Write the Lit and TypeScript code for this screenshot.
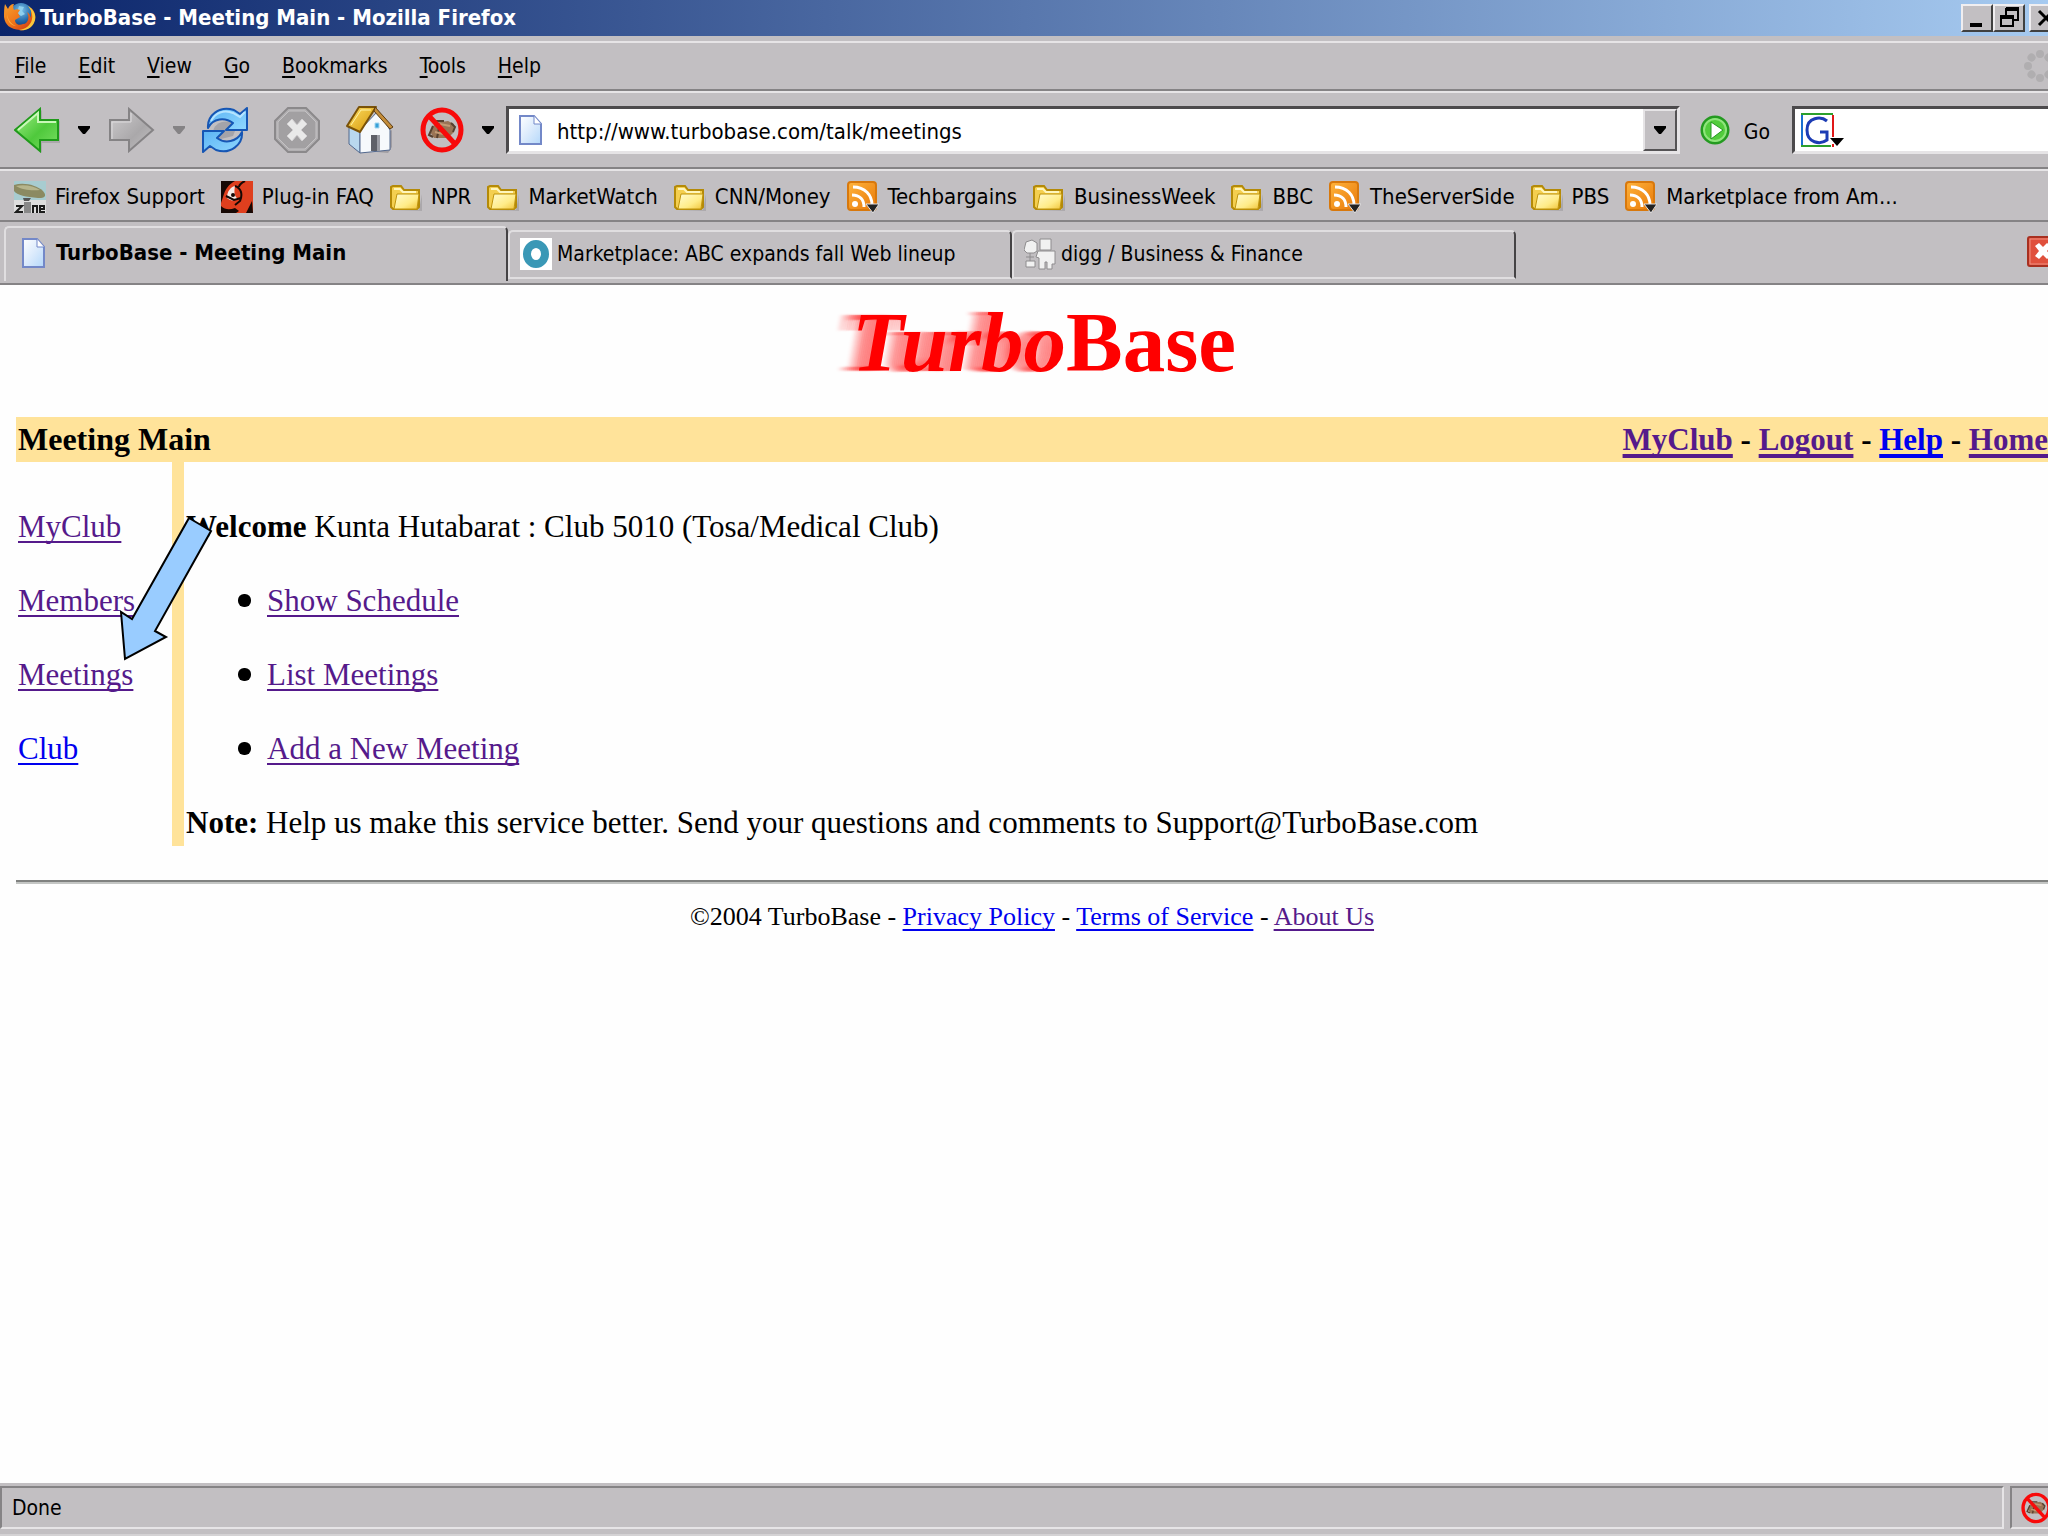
import { LitElement, html, css, svg, nothing } from "lit";
import { customElement } from "lit/decorators.js";
import { classMap } from "lit/directives/class-map.js";

const firefoxIcon = html`<svg class="ic32" viewBox="0 0 32 32" aria-hidden="true">
  <defs>
    <radialGradient id="globe" cx=".5" cy=".3" r=".7"><stop offset="0" stop-color="#7cc4ea"/><stop offset=".6" stop-color="#2a6fae"/><stop offset="1" stop-color="#123a78"/></radialGradient>
    <linearGradient id="fox" x1="0" y1="0" x2="1" y2="1"><stop offset="0" stop-color="#f7a12c"/><stop offset=".5" stop-color="#f0741a"/><stop offset="1" stop-color="#c92a12"/></linearGradient>
  </defs>
  <circle cx="17" cy="13" r="12" fill="url(#globe)"/>
  <path d="M15 4l5 1-2 4 3 3-4 2-4-3z" fill="#8fd0ee"/>
  <path d="M1 2l3 5c1-3 3-5 6-5-1 2-1 4 0 6 2-1 4-1 6 0l-2 3 2 4-5 3c0 4 4 6 8 4 3 0 4-2 5-4 1-3 0-6-1-8 2 1 3 3 4 6V6c5 4 5 10 3 14-3 6-9 9-14 8C6 27 1 23 0 15c0-5 0-9 1-13z" fill="url(#fox)"/>
  <path d="M24 4c7 4 9 11 6 17-3 6-9 8-15 7 7-1 12-5 13-11 1-5-1-9-4-13z" fill="#f9c63a"/>
  <path d="M3 12c1 6 4 10 9 12-5 0-9-5-9-12z" fill="#fbb040"/>
</svg>`;

const backIcon = html`<svg class="ic46" viewBox="0 0 46 46" aria-hidden="true">
  <defs><linearGradient id="gr" x1="0" y1="0" x2="1" y2="1"><stop offset="0" stop-color="#a5f08a"/><stop offset=".55" stop-color="#4fc93c"/><stop offset="1" stop-color="#7be064"/></linearGradient></defs>
  <path d="M3 25L28 3v11h18v22H28v10z" fill="#8a888a" opacity=".4"/>
  <path d="M1 23L26 2v11h18v20H26v11z" fill="url(#gr)" stroke="#1f9a1a" stroke-width="2"/>
  <path d="M4 23L24 6v9h18" fill="none" stroke="#c9f8b8" stroke-width="2"/>
</svg>`;

const forwardIcon = html`<svg class="ic46" viewBox="0 0 46 46" aria-hidden="true">
  <defs><linearGradient id="gy" x1="0" y1="0" x2="1" y2="1"><stop offset="0" stop-color="#cfcdcf"/><stop offset=".6" stop-color="#aaa8aa"/><stop offset="1" stop-color="#c4c2c4"/></linearGradient></defs>
  <path d="M44 23L20 2v11H1v20h19v11z" fill="url(#gy)" stroke="#858385" stroke-width="2"/>
  <path d="M3 32V15h19V6" fill="none" stroke="#dddbdd" stroke-width="1"/>
</svg>`;

const reloadIcon = html`<svg class="ic46" viewBox="0 0 46 46" aria-hidden="true">
  <defs><linearGradient id="bl" x1="0" y1="0" x2="1" y2="1"><stop offset="0" stop-color="#5cb4f4"/><stop offset="1" stop-color="#90d8ff"/></linearGradient></defs>
  <path d="M11 26c0-8 8-13 18-11l6 4-4 10-12 3z" fill="#8f9198" opacity=".6"/>
  <path d="M6 21C5 9 17-2 32 3l6 4 7-6v22H24l7-7c-8-6-20-5-25 5z" fill="url(#bl)" stroke="#1656b4" stroke-width="2" stroke-linejoin="round"/>
  <path d="M40 25c1 12-11 23-26 18l-6-4-7 6V24h21l-7 7c8 6 20 4 25-6z" fill="url(#bl)" stroke="#1656b4" stroke-width="2" stroke-linejoin="round"/>
  <path d="M9 14C13 6 22 2 31 6l7 4 5-5" fill="none" stroke="#b6e4ff" stroke-width="2"/>
</svg>`;

const stopIcon = html`<svg class="ic46" viewBox="0 0 46 46" aria-hidden="true">
  <path d="M14 1h18l13 13v18L32 45H14L1 32V14z" fill="#b2b0b2" stroke="#8b898b" stroke-width="2"/>
  <path d="M15 4h16l11 11v16L31 42H15L4 31V15z" fill="#a2a0a2" stroke="#c4c2c4" stroke-width="1"/>
  <path d="M13 17l5-5 5 6 5-6 5 5-6 6 6 6-5 5-5-6-5 6-5-5 6-6z" fill="#e9e9e9" stroke="#d2d0d2"/>
</svg>`;

const homeIcon = html`<svg class="ic48" viewBox="0 0 48 48" aria-hidden="true">
  <defs><linearGradient id="roof" x1="0" y1="0" x2="1" y2="1"><stop offset="0" stop-color="#ffdf62"/><stop offset="1" stop-color="#d29408"/></linearGradient></defs>
  <path d="M8 44l34 3 4-6V24z" fill="#6e6c72" opacity=".4"/>
  <path d="M3 19l11 5v23L3 38z" fill="#b9d8ee" stroke="#52688e"/>
  <path d="M14 24L32 5l12 19v20l-30 3z" fill="#f6f9fc" stroke="#52688e"/>
  <path d="M25 29h9v16h-9z" fill="#5e6068"/><path d="M31 29h3v16h-3z" fill="#9a9ca4"/>
  <path d="M29 17h4v5h-4z" fill="#37a0d8" stroke="#a4d6f0"/>
  <path d="M1 20L13 1h17L14 26z" fill="url(#roof)" stroke="#7a5208" stroke-width="2" stroke-linejoin="round"/>
  <path d="M29 1l18 20-3 2L28 5z" fill="#c48d3a" stroke="#5c3c10"/>
  <path d="M5 19l10-15h10" fill="none" stroke="#fff4a8"/>
</svg>`;

const blockIcon = (cls: string) => html`<svg class=${cls} viewBox="0 0 44 46" aria-hidden="true">
  <path d="M15 16l13-2 6 3v8l-6 6H14l-4-6z" fill="#9a7456"/>
  <path d="M14 14h10M13 19l-4 9 4 2M19 21l-2 10M31 16l4 4-2 5" stroke="#57402f" stroke-width="2" fill="none"/>
  <path d="M20 17l10 2M15 25l8 2" stroke="#c39a74" stroke-width="2"/>
  <path d="M10 10l25 27" stroke="#f80a0a" stroke-width="5"/>
  <ellipse cx="22" cy="23" rx="19" ry="20" fill="none" stroke="#f80a0a" stroke-width="5"/>
</svg>`;

const pageIcon = html`<svg class="page-icon" viewBox="0 0 24 30" aria-hidden="true">
  <defs><linearGradient id="pg" x1="0" y1="0" x2="1" y2="1"><stop offset="0" stop-color="#fff"/><stop offset=".5" stop-color="#dcebfc"/><stop offset="1" stop-color="#b4d8fa"/></linearGradient></defs>
  <path d="M1 1h14l7 8v20H1z" fill="url(#pg)" stroke="#7388c8" stroke-width="2"/>
  <path d="M15 1v8h7" fill="#fff" stroke="#7388c8" stroke-width="1"/>
</svg>`;

const folderIcon = html`<svg class="ic32" viewBox="0 0 32 32" aria-hidden="true">
  <defs><linearGradient id="fd" x1="0" y1="0" x2="1" y2="1"><stop offset="0" stop-color="#fffbd0"/><stop offset=".6" stop-color="#ffec88"/><stop offset="1" stop-color="#f0c43a"/></linearGradient></defs>
  <path d="M4 29h25l3-16v17z" fill="#8a888a" opacity=".4"/>
  <path d="M1 6l2-1h8l3 4h15v17l-2 2H3l-2-2z" fill="#f4cf50" stroke="#b48a08" stroke-width="2"/>
  <path d="M4 8h6l3 3h13" stroke="#fff6bc" stroke-width="2" fill="none"/>
  <path d="M7 13h22l-2 15H4z" fill="url(#fd)" stroke="#c0940c" stroke-width="1"/>
</svg>`;

const feedIcon = html`<svg class="ic32" viewBox="0 0 32 32" aria-hidden="true">
  <defs><linearGradient id="rss" x1="0" y1="0" x2="1" y2="1"><stop offset="0" stop-color="#ffb43c"/><stop offset="1" stop-color="#e87808"/></linearGradient></defs>
  <rect x="1" y="1" width="28" height="28" rx="3" fill="url(#rss)" stroke="#d8780c" stroke-width="2"/>
  <circle cx="8" cy="23" r="3" fill="#fff"/>
  <path d="M5 14c8 0 12 5 12 12M6 6c12 0 19 8 19 18" fill="none" stroke="#fff" stroke-width="3"/>
  <path d="M19 23h13l-6 9z" fill="#222" stroke="#e2e0e2" stroke-width="1"/>
</svg>`;

const zineIcon = html`<svg class="ic32" viewBox="0 0 32 32" aria-hidden="true">
  <rect width="32" height="20" fill="#a8ccd0"/><rect y="19" width="32" height="13" fill="#dedede"/>
  <path d="M0 4c10-3 22 0 29 6 4 5 2 7-5 7C12 16 3 14 0 10z" fill="#8b8a62"/>
  <path d="M2 5c8-2 18 0 24 4-8 1-18 0-24-4z" fill="#b6b58c"/>
  <path d="M9 17h8l-2 3h-5z" fill="#555"/>
  <rect x="10" y="21" width="7" height="11" fill="#888"/>
  <path d="M2 25h6l-6 6h7M19 32v-7h4v7M26 28h4v-3h-4v6h5" fill="none" stroke="#1c1c1c" stroke-width="2"/>
</svg>`;

const mozillaIcon = html`<svg class="ic32" viewBox="0 0 32 32" aria-hidden="true">
  <rect width="32" height="32" fill="#df3f1e"/>
  <path d="M0 0h14C8 3 4 8 2 16L0 22zM0 25c4 4 9 4 14 2l4 3-3 2H0zM32 32h-7l6-12z" fill="#160804"/>
  <path d="M6 17c0-6 3-11 8-12-1 6-1 10 3 13-4 2-8 2-11-1z" fill="#f4ece8"/>
  <path d="M5 15l8 4 7-2M14 5c6 2 8 8 5 15l-5 4M24 0c-4 2-6 4-6 6" fill="none" stroke="#160804" stroke-width="2"/>
  <circle cx="12" cy="14" r="2" fill="#160804"/>
</svg>`;

const ringIcon = html`<svg class="ic32" viewBox="0 0 32 32" aria-hidden="true">
  <rect width="32" height="32" fill="#fff"/><ellipse cx="16" cy="16" rx="9" ry="10" fill="#fff" stroke="#3a98b6" stroke-width="8"/>
</svg>`;

const diggIcon = html`<svg class="ic32" viewBox="0 0 32 32" aria-hidden="true">
  <g fill="#f1f1f1" stroke="#8e8c8e" stroke-width="1">
    <path d="M2 4l6-2 5 3v8l-3 2H3l-3-3z"/><path d="M6 15v8M2 19h8" fill="none"/><path d="M2 23h9v6H2z"/>
    <path d="M16 1h11v11H16z"/><path d="M14 13h17v13h-3v5h-5v-7h-2v7h-6V20l-3-1z"/>
  </g>
</svg>`;

const goIcon = html`<svg class="ic32" viewBox="0 0 32 32" aria-hidden="true">
  <circle cx="16" cy="16" r="13" fill="#52cc3c" stroke="#249a20" stroke-width="3"/>
  <circle cx="16" cy="16" r="11" fill="none" stroke="#8fe47c" stroke-width="2"/>
  <path d="M12 8l12 8-12 9z" fill="#fff" stroke="#249a20"/>
</svg>`;

const searchEngineIcon = html`<svg class="engine" viewBox="0 0 44 34" aria-hidden="true">
  <path d="M1 34V1" stroke="#1a6fd0" stroke-width="2"/><path d="M0 1h32M0 33h30" stroke="#2ca02c" stroke-width="2"/>
  <path d="M32 2v22M32 31v3" stroke="#e01818" stroke-width="2"/>
  <path d="M26 8C20 3 6 4 6 17s13 15 20 10V19h-7" fill="none" stroke="#1c3cb4" stroke-width="3"/>
  <path d="M29 25h14l-7 8z" fill="#000"/>
</svg>`;

const tri = (disabled = false) => html`<svg class="tri" viewBox="0 0 12 8" aria-hidden="true"><path d="M0 0h12v2l-5 6H5L0 2z" fill=${disabled ? "#858385" : "#000"}/></svg>`;

const throbber = html`<svg class="throbber" viewBox="0 0 34 34" aria-hidden="true">
  ${[0, 45, 90, 135, 180, 225, 270, 315].map(a => svg`<circle cx="17" cy="5" r="4" fill="#b0aeb0" transform=${`rotate(${a} 17 17)`}/>`)}
</svg>`;

const closeTabIcon = html`<svg class="ic32" viewBox="0 0 32 32" aria-hidden="true">
  <rect x="1" y="1" width="30" height="29" rx="2" fill="#e0503c" stroke="#a83020" stroke-width="2"/>
  <rect x="3" y="3" width="26" height="25" fill="none" stroke="#f09080"/>
  <path d="M8 10l4-3 4 4 4-4 4 3-4 5 4 5-4 3-4-4-4 4-4-3 4-5z" fill="#fff"/>
</svg>`;

const menus = ["File", "Edit", "View", "Go", "Bookmarks", "Tools", "Help"];

const bookmarks = [
  { icon: zineIcon, label: "Firefox Support" },
  { icon: mozillaIcon, label: "Plug-in FAQ" },
  { icon: folderIcon, label: "NPR" },
  { icon: folderIcon, label: "MarketWatch" },
  { icon: folderIcon, label: "CNN/Money" },
  { icon: feedIcon, label: "Techbargains" },
  { icon: folderIcon, label: "BusinessWeek" },
  { icon: folderIcon, label: "BBC" },
  { icon: feedIcon, label: "TheServerSide" },
  { icon: folderIcon, label: "PBS" },
  { icon: feedIcon, label: "Marketplace from Am..." },
];

const tabs = [
  { icon: pageIcon, label: "TurboBase - Meeting Main", active: true },
  { icon: ringIcon, label: "Marketplace: ABC expands fall Web lineup", active: false },
  { icon: diggIcon, label: "digg / Business & Finance", active: false },
];

const headerLinks = [
  { label: "MyClub", fresh: false },
  { label: "Logout", fresh: false },
  { label: "Help", fresh: true },
  { label: "Home", fresh: false },
];

@customElement("browser-chrome")
class BrowserChrome extends LitElement {
  static styles = css`
    :host { display: block; color: #000; font: 21px/28px "DejaVu Sans Condensed", Tahoma, sans-serif; }
    * { box-sizing: border-box; }
    svg { display: block; flex: none; }
    button { font: inherit; color: inherit; background: none; border: 0; padding: 0; margin: 0; display: flex; align-items: center; flex: none; white-space: nowrap; }
    .ic32 { width: 32px; height: 32px; }
    .ic46 { width: 46px; height: 46px; }
    .ic48 { width: 48px; height: 48px; }
    .block { width: 44px; height: 46px; }
    .page-icon { width: 24px; height: 30px; }
    .tri { width: 12px; height: 8px; }
    .titlebar { display: flex; align-items: center; height: 36px; padding: 0 0 0 4px; gap: 4px; background: linear-gradient(to right, #0a246a, #a6caf0); color: #fff; }
    .titlebar h1 { flex: 1; margin: 0; font-size: 22px; line-height: 32px; font-weight: bold; white-space: nowrap; }
    .winbtns { display: flex; margin-right: -13px; }
    .winbtns button { width: 32px; height: 28px; background: #c2bfc2; border: 2px solid; border-color: #f0eef0 #404040 #404040 #f0eef0; justify-content: center; }
    .winbtns .close { margin-left: 4px; }
    .winbtns svg { width: 24px; height: 22px; }
    .bar { display: flex; align-items: center; border-bottom: 2px solid #858385; border-top: 2px solid #e6e4e6; }
    .menubar { height: 50px; padding: 0 0 0 15px; gap: 32px; margin-top: 5px; }
    .menubar u { text-decoration-thickness: 2px; text-underline-offset: 3px; text-decoration-skip-ink: none; }
    .label { display: block; }
    .throbber { width: 34px; height: 34px; margin-left: auto; margin-right: -9px; }
    .navbar { height: 78px; padding: 0 0 0 14px; }
    .navbar .withmenu { gap: 18px; }
    .navbar .gap-s { margin-left: 17px; }
    .navbar .gap-m { margin-left: 19px; }
    .navbar .gap-l { margin-left: 26px; }
    .field { display: flex; align-items: center; height: 48px; background: #fff; border: 3px solid; border-color: #4c4a4c #e6e4e6 #e6e4e6 #4c4a4c; }
    .url { flex: 1; margin-left: 12px; padding-left: 10px; gap: 14px; min-width: 0; }
    input { font: 22px/28px "DejaVu Sans Condensed", Tahoma, sans-serif; color: #000; border: 0; padding: 3px 0 0; outline: 0; background: none; flex: 1; min-width: 0; }
    .drop { width: 34px; height: 42px; background: #c2bfc2; border: 2px solid; border-color: #e6e4e6 #555355 #555355 #e6e4e6; justify-content: center; }
    .go { margin: 0 22px 0 19px; gap: 13px; }
    .go .label { padding-top: 3px; }
    .search { width: 267px; margin-right: -11px; padding-left: 6px; }
    .engine { width: 44px; height: 34px; }
    .bookmarks { height: 53px; padding: 2px 0 0 14px; gap: 16px; font-size: 22px; }
    .bookmarks button { gap: 9px; }
    .tabbar { display: flex; height: 63px; padding: 4px 0 0 4px; border-bottom: 2px solid #858385; }
    .tab { width: 504px; height: 49px; margin-top: 4px; padding: 0 4px 2px 10px; gap: 5px; border: 2px solid; border-color: #e0dee0 #454345 #e0dee0 #e0dee0; border-radius: 5px 5px 0 0; }
    .tab.active { height: 55px; margin-top: 0; padding: 0 0 4px 16px; gap: 10px; font-size: 22px; font-weight: bold; border-bottom: 0; }
    .closetab { margin: 10px -11px 0 auto; align-self: flex-start; }
  `;

  render() {
    return html`
      <header class="titlebar">
        ${firefoxIcon}
        <h1>TurboBase - Meeting Main - Mozilla Firefox</h1>
        <div class="winbtns">
          <button aria-label="Minimize"><svg viewBox="0 0 24 22"><path d="M5 16h12v4H5z"/></svg></button>
          <button aria-label="Restore"><svg viewBox="0 0 24 22"><path d="M9 1h12v12h-4M9 1v7M9 3h12" fill="none" stroke="#000" stroke-width="2"/><path d="M4 9h12v10H4zM4 11h12" fill="none" stroke="#000" stroke-width="2"/></svg></button>
          <button class="close" aria-label="Close"><svg viewBox="0 0 24 22"><path d="M6 4l14 14M20 4L6 18" stroke="#000" stroke-width="3"/></svg></button>
        </div>
      </header>
      <nav class="bar menubar" aria-label="Menu">
        ${menus.map(m => html`<button><span class="label"><u>${m[0]}</u>${m.slice(1)}</span></button>`)}
        ${throbber}
      </nav>
      <div class="bar navbar">
        <button class="withmenu" aria-label="Back">${backIcon}${tri()}</button>
        <button class="withmenu gap-m" aria-label="Forward" disabled>${forwardIcon}${tri(true)}</button>
        <button class="gap-s" aria-label="Reload">${reloadIcon}</button>
        <button class="gap-l" aria-label="Stop" disabled>${stopIcon}</button>
        <button class="gap-l" aria-label="Home">${homeIcon}</button>
        <button class="withmenu gap-l" aria-label="Block content">${blockIcon("block")}${tri()}</button>
        <div class="field url">
          ${pageIcon}
          <input aria-label="Address" type="text" value="http://www.turbobase.com/talk/meetings">
          <button class="drop" aria-label="Show history">${tri()}</button>
        </div>
        <button class="go">${goIcon}<span class="label">Go</span></button>
        <div class="field search">
          <button aria-label="Choose search engine">${searchEngineIcon}</button>
          <input aria-label="Search" type="text">
        </div>
      </div>
      <nav class="bar bookmarks" aria-label="Bookmarks">
        ${bookmarks.map(b => html`<button>${b.icon}<span>${b.label}</span></button>`)}
      </nav>
      <div class="tabbar" role="tablist">
        ${tabs.map(t => html`<button role="tab" aria-selected=${t.active ? "true" : "false"} class=${classMap({ tab: true, active: t.active })}>${t.icon}<span>${t.label}</span></button>`)}
        <button class="closetab" aria-label="Close tab">${closeTabIcon}</button>
      </div>
    `;
  }
}

@customElement("club-page")
class ClubPage extends LitElement {
  static styles = css`
    :host { display: block; position: relative; background: #fefefe; color: #000; padding: 9px 0 0 16px; font: 31px/37px "Liberation Serif", "Times New Roman", serif; }
    * { box-sizing: border-box; }
    a { color: #551a8b; text-decoration: underline 2px; text-underline-offset: 4px; text-decoration-skip-ink: none; }
    a.fresh { color: #0000ee; }
    .logo { margin: 0 0 27px; padding-left: 24px; text-align: center; font-size: 85px; line-height: 96px; font-weight: bold; color: #f00; }
    .logo em { text-shadow: -2px 0 1px rgba(255,0,0,.1), -4px 0 1px rgba(255,0,0,.1), -6px 0 1px rgba(255,0,0,.1), -8px 0 1px rgba(255,0,0,.1), -10px 0 1px rgba(255,0,0,.1), -12px 0 1px rgba(255,0,0,.1), -14px 0 2px rgba(255,0,0,.1), -16px 0 2px rgba(255,0,0,.08), -18px 0 2px rgba(255,0,0,.08), -20px 0 2px rgba(255,0,0,.06), -22px 0 3px rgba(255,0,0,.06); }
    .band { display: flex; justify-content: space-between; align-items: center; height: 45px; padding-left: 2px; background: #ffe39a; font-weight: bold; }
    .band h2 { margin: 0; font-size: 32px; line-height: 37px; }
    .band a { text-decoration-thickness: 4px; }
    .columns { display: grid; grid-template-columns: 156px 12px 1fr; }
    .rule { background: #ffe39a; }
    ul { list-style: none; margin: 0; padding: 0; display: flex; flex-direction: column; gap: 37px; }
    .side { padding: 46px 0 0 2px; }
    .main { padding: 46px 0 5px 2px; }
    .main p { margin: 0; }
    .main ul { margin: 37px 0; padding-left: 52px; }
    .main li { display: flex; align-items: center; gap: 16px; }
    .main li::before { content: ""; width: 13px; height: 13px; border-radius: 6px; background: #000; }
    hr { margin: 34px 0 0; border: 0; height: 4px; border-top: 2px solid #808280; border-bottom: 2px solid #c4c6c4; }
    footer { margin-top: 17px; text-align: center; font-size: 26px; line-height: 32px; }
    .pointer { position: absolute; left: 118px; top: 231px; width: 96px; height: 146px; }
  `;

  render() {
    return html`
      <h1 class="logo"><em>Turbo</em>Base</h1>
      <header class="band">
        <h2>Meeting Main</h2>
        <nav>${headerLinks.map((l, i) => html`${i ? " - " : nothing}<a href="#" class=${classMap({ fresh: l.fresh })}>${l.label}</a>`)}</nav>
      </header>
      <div class="columns">
        <nav class="side">
          <ul>
            <li><a href="#">MyClub</a></li>
            <li><a href="#">Members</a></li>
            <li><a href="#">Meetings</a></li>
            <li><a href="#" class="fresh">Club</a></li>
          </ul>
        </nav>
        <div class="rule"></div>
        <main class="main">
          <p><b>Welcome</b> Kunta Hutabarat : Club 5010 (Tosa/Medical Club)</p>
          <ul>
            <li><a href="#">Show Schedule</a></li>
            <li><a href="#">List Meetings</a></li>
            <li><a href="#">Add a New Meeting</a></li>
          </ul>
          <p><b>Note:</b> Help us make this service better. Send your questions and comments to Support@TurboBase.com</p>
        </main>
      </div>
      <hr>
      <footer>©2004 TurboBase - <a href="#" class="fresh">Privacy Policy</a> - <a href="#" class="fresh">Terms of Service</a> - <a href="#">About Us</a></footer>
      <svg class="pointer" viewBox="118 516 96 146" aria-hidden="true">
        <path d="M189 518L211 531L155 631L166 637L125 659L121 612L132 619z" fill="#99ccff" stroke="#000" stroke-width="2"/>
      </svg>
    `;
  }
}

@customElement("app-root")
class AppRoot extends LitElement {
  static styles = css`
    :host { display: flex; flex-direction: column; min-height: 100vh; overflow: hidden; background: #c2bfc2; font: 21px/28px "DejaVu Sans Condensed", Tahoma, sans-serif; }
    club-page { flex: 1; }
    .status { display: flex; gap: 6px; padding: 3px 0 5px; border-bottom: 2px solid #d4d2d4; height: 53px; box-sizing: border-box; }
    .cell { border: 2px solid; border-color: #858385 #e6e4e6 #e6e4e6 #858385; display: flex; align-items: center; box-sizing: border-box; }
    .text { flex: 1; padding-left: 10px; }
    .blocked { width: 54px; margin-right: -16px; padding-left: 9px; }
    .icon { width: 30px; height: 32px; flex: none; }
  `;

  render() {
    return html`
      <browser-chrome></browser-chrome>
      <club-page></club-page>
      <footer class="status">
        <div class="cell text">Done</div>
        <div class="cell blocked">${blockIcon("icon")}</div>
      </footer>
    `;
  }
}
